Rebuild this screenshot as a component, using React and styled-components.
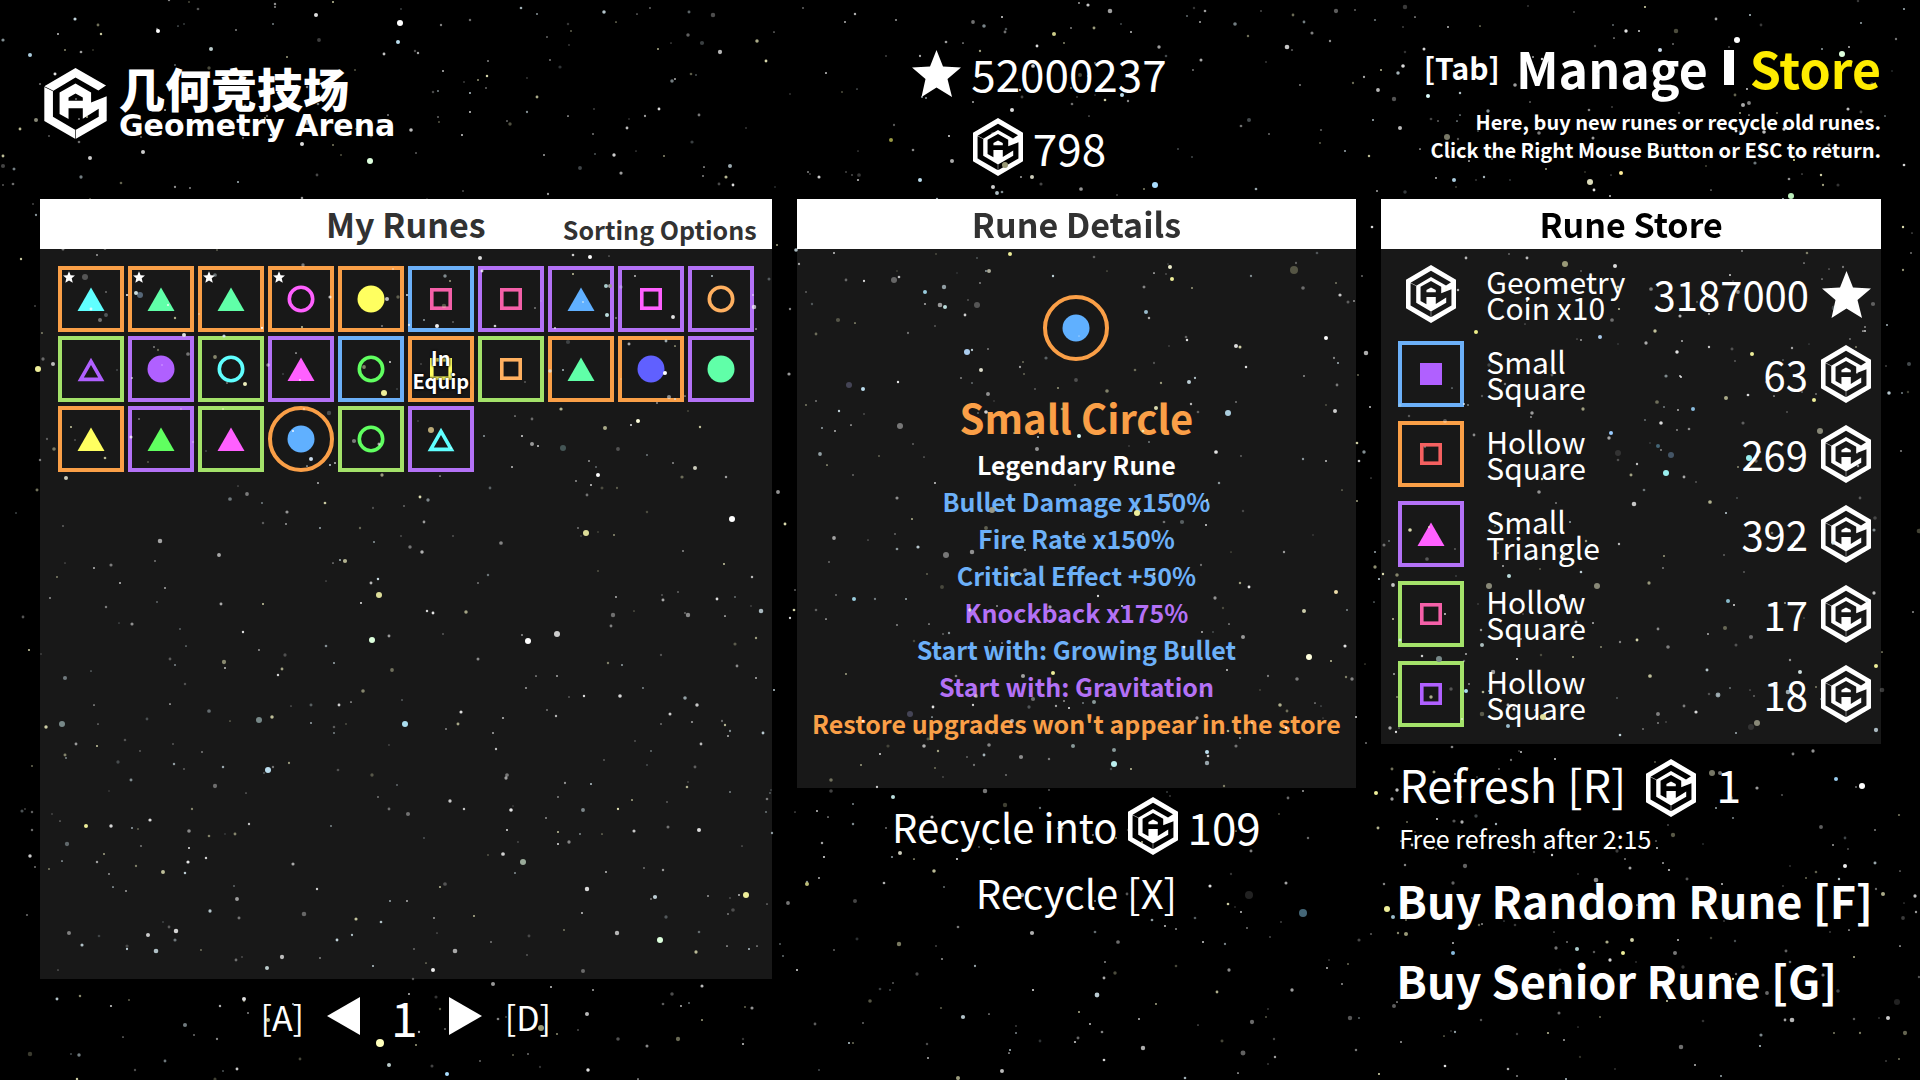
import styled, { createGlobalStyle, css } from 'styled-components'

const GlobalStyle = createGlobalStyle`
    * {
        box-sizing: border-box;
    }

    body {
        margin: 0;
        background: #000;
        color: #fff;
        font-family: "Noto Sans CJK SC", "Noto Sans", sans-serif;
    }

    button {
        padding: 0;
        border: 0;
        background: none;
        color: inherit;
        font: inherit;
        cursor: pointer;
    }

    h1, h2, h3, p, ul {
        margin: 0;
        padding: 0;
        list-style: none;
    }
`;

const rarity = {
    legendary: '#fa9f47',
    epic: '#b371f6',
    rare: '#6cb0f8',
    normal: '#a4e26a',
}

const colors = {
    cyan: '#60ffff',
    mint: '#60ffa8',
    magenta: '#ff60ff',
    yellow: '#ffff60',
    pink: '#f460a8',
    blue: '#60b0ff',
    orange: '#ffb060',
    purple: '#b060ff',
    green: '#60ff60',
    indigo: '#6060ff',
    red: '#f46060',
}

const Page = styled.div`
    min-height: 100vh;
    padding: 0 39px 0 40px;
`;

const Header = styled.header`
    display: grid;
    grid-template-columns: minmax(0, 732fr) minmax(0, 486fr) minmax(0, 574fr);
    column-gap: 25px;
    height: 199px;
`;

const Brand = styled.div`
    display: flex;
    align-items: center;
    align-self: start;
    gap: 12px;
    padding: 64px 0 0 4px;
`;

const BrandText = styled.h1`
    font-size: 46px;
    font-weight: 900;
    line-height: 46px;

    small {
        display: block;
        font-family: "DejaVu Sans", sans-serif;
        font-size: 30px;
        font-weight: 700;
        line-height: 32px;
    }
`;

const Wallet = styled.div`
    display: flex;
    flex-direction: column;
    align-items: center;
    gap: 14px;
    padding-top: 43px;
`;

const Amount = styled.div`
    display: flex;
    align-items: center;
    gap: 10px;
    font-size: 44px;
    line-height: 60px;
`;

const HeaderRight = styled.div`
    display: flex;
    flex-direction: column;
    align-items: flex-end;
    gap: 14px;
    padding-top: 40px;
`;

const Modes = styled.nav`
    display: flex;
    align-items: center;
    gap: 16px;
    font-size: 50px;
    font-weight: 700;
    line-height: 54px;
`;

const ModeKey = styled.span`
    font-size: 30px;
`;

const ModeBar = styled.span`
    width: 10px;
    height: 35px;
    background: #fff;
`;

const ModeButton = styled.button`
    color: ${props => props.$active ? '#ffec00' : '#fff'};
`;

const Hint = styled.p`
    font-size: 20px;
    font-weight: 700;
    line-height: 28px;
    text-align: right;
`;

const Columns = styled.main`
    display: grid;
    grid-template-columns: minmax(0, 732fr) minmax(0, 560fr) minmax(0, 500fr);
    column-gap: 25px;
    align-items: start;
`;

const Panel = styled.section`
    background: #181818;
`;

const PanelHeader = styled.div`
    position: relative;
    z-index: 2;
    display: grid;
    grid-template-columns: 1fr auto 1fr;
    align-items: center;
    height: 50px;
    padding: 0 15px;
    background: #fff;
    color: ${props => props.$dark ? '#000' : '#323232'};

    h2 {
        grid-column: 2;
        font-size: 34px;
        font-weight: 700;
        line-height: 50px;
    }
`;

const SortButton = styled.button`
    justify-self: end;
    padding-top: 10px;
    font-size: 25px;
    font-weight: 700;
    line-height: 40px;
`;

const RuneGrid = styled.div`
    display: grid;
    grid-template-columns: repeat(10, 66px);
    grid-template-rows: repeat(10, 66px);
    gap: 4px;
    justify-content: center;
    padding: 17px 0;
`;

const runeBox = css`
    position: relative;
    display: flex;
    align-items: center;
    justify-content: center;
    flex: none;
    width: 66px;
    height: 66px;
    border: 4px solid ${props => rarity[props.$rarity]};
    border-radius: ${props => props.$round ? '50%' : '0'};
`;

const RuneButton = styled.button`
    ${runeBox}
`;

const RuneFrame = styled.span`
    ${runeBox}
`;

const Fav = styled.span`
    position: absolute;
    top: 1px;
    left: 1px;
    display: flex;
`;

const EquipTag = styled.span`
    position: absolute;
    inset: 0;
    display: flex;
    align-items: center;
    justify-content: center;
    font-size: 20px;
    font-weight: 700;
    line-height: 23px;
    text-shadow: 0 0 2px #000, 0 0 3px #000;
`;

const Pager = styled.nav`
    display: flex;
    align-items: center;
    justify-content: center;
    gap: 23px;
    height: 74px;
    font-size: 34px;

    strong {
        padding: 0 8px;
        font-size: 48px;
        font-weight: 400;
    }

    svg {
        display: block;
    }
`;

const Details = styled.div`
    display: flex;
    flex-direction: column;
    align-items: center;
    padding: 46px 0;
`;

const RuneName = styled.h3`
    margin-top: 27px;
    color: ${rarity.legendary};
    font-size: 40px;
    font-weight: 700;
    line-height: 58px;
`;

const Effect = styled.li`
    color: ${props => rarity[props.$rarity] || '#fff'};
    font-size: 25px;
    font-weight: 700;
    line-height: 37px;
    text-align: center;
    white-space: nowrap;
`;

const RecycleRow = styled.div`
    display: flex;
    align-items: center;
    justify-content: center;
    gap: 10px;
    padding-top: 5px;
    font-size: 40px;
    line-height: 66px;
`;

const RecycleAmount = styled.span`
    font-size: 44px;
`;

const RecycleButton = styled.button`
    display: block;
    margin: 0 auto;
    font-size: 40px;
    line-height: 66px;
`;

const StoreList = styled.ul`
    padding: 5px 10px 10px 17px;
`;

const StoreItem = styled.button`
    display: flex;
    align-items: center;
    width: 100%;
    height: 80px;
    text-align: left;
`;

const StoreIcon = styled.span`
    display: flex;
    justify-content: center;
    flex: none;
    width: 66px;
`;

const StoreName = styled.span`
    flex: 1;
    padding-left: 22px;
    font-size: 30px;
    line-height: 26px;
`;

const Price = styled.span`
    padding-right: 13px;
    font-size: 40px;
    line-height: 60px;
`;

const RefreshButton = styled.button`
    display: flex;
    align-items: center;
    gap: 20px;
    height: 58px;
    margin: 15px 0 0 18px;
    font-size: 45px;
    line-height: 50px;

    span {
        padding-bottom: 8px;
    }
`;

const RefreshNote = styled.p`
    margin: 4px 0 5px 18px;
    font-size: 25px;
    line-height: 34px;
`;

const BuyButton = styled.button`
    display: block;
    margin-left: 15px;
    font-size: 45px;
    font-weight: 700;
    line-height: 80px;
    white-space: nowrap;
`;

const Sky = styled.svg`
    position: fixed;
    inset: 0;
    z-index: 1;
    width: 100%;
    height: 100%;
    pointer-events: none;
`;

const mark = 'M166 83L258 136L235 151L166 112L98 152V230L166 270L236 230V206L188 236V204H145V237L118 222V157L166 130L213 157V187L260 168V243L166 297L72 243V138Z M145 182V172L166 160L188 172V182Z M72 138L98 151V153L72 140Z M165 270H167V297H165Z'

const Logo = () => (
    <svg width="63" height="71" viewBox="72 83 188 214" aria-hidden="true">
        <path d={mark} fill="#fff" fillRule="evenodd" />
    </svg>
)

const Coin = () => (
    <svg width="50" height="58" viewBox="51 57 230 266" aria-hidden="true">
        <path d={'M166 57L281 124V256L166 323L51 256V124Z ' + mark} fill="#fff" fillRule="evenodd" />
    </svg>
)

const Star = ({ size = 49 }) => (
    <svg width={size} height={size} viewBox="0 0 49 49" aria-hidden="true">
        <path d="M24.5 1L31 17.5L49 18.5L35.5 30L40 48L24.5 38.5L9.5 48L13.5 30L0 18.5L18 17.5Z" fill="#fff" />
    </svg>
)

const Arrow = ({ right }) => (
    <svg width="33" height="38" viewBox="0 0 33 38" aria-hidden="true">
        <path d={right ? 'M0 0L33 19L0 38Z' : 'M33 0L0 19L33 38Z'} fill="#fff" />
    </svg>
)

const Shape = ({ shape, color, hollow }) => {
    const paint = hollow
        ? { fill: 'none', stroke: colors[color], strokeWidth: 3.6 }
        : { fill: colors[color] }
    const inset = hollow ? 1.8 : 0
    return (
        <svg width="28" height="28" viewBox="0 0 28 28" aria-hidden="true">
            {shape === 'circle' && <circle cx="14" cy="14" r={13.5 - inset} {...paint} />}
            {shape === 'square' && (
                <rect x={3 + inset} y={3 + inset} width={22 - inset * 2} height={22 - inset * 2} {...paint} />
            )}
            {shape === 'triangle' && (
                <path d={hollow ? 'M14 6.4L24.3 24.4H3.7Z' : 'M14 2.5L27.5 26H0.5Z'} {...paint} />
            )}
        </svg>
    )
}

// brighter stars, the faint ones are generated
const brightStars = [
    [400, 23, 3, '#fff'], [30, 55, 2, '#acd'], [158, 31, 2, '#fff'], [211, 49, 2, '#bcc'], [316, 15, 2, '#ddd'], [398, 42, 2, '#bde'],
    [370, 161, 3, '#dfd'], [143, 152, 2, '#ccc'], [90, 158, 2, '#ccc'], [302, 144, 2, '#ddd'], [36, 120, 2, '#887'],
    [38, 369, 3, '#ee9'], [53, 364, 2, '#bbb'], [85, 277, 3, '#555'], [140, 295, 3, '#567'], [136, 293, 2, '#cdd'],
    [387, 299, 2, '#bbb'], [384, 393, 3, '#ee9'], [245, 384, 2, '#eeb'], [311, 459, 2, '#cde'], [66, 478, 2, '#ccb'],
    [184, 335, 2, '#ddd'], [606, 286, 2, '#acc'], [607, 315, 2, '#bdd'], [610, 286, 2, '#999'], [665, 373, 2, '#fff'],
    [431, 430, 3, '#ba7'], [605, 428, 2, '#aa8'], [638, 421, 2, '#ffd'], [563, 448, 3, '#455'], [532, 444, 2, '#999'],
    [695, 468, 2, '#ccb'], [598, 475, 2, '#fff'], [590, 257, 2, '#fff'], [480, 258, 2, '#ddd'], [437, 326, 2, '#eee'],
    [1054, 34, 2, '#cc8'], [1122, 95, 2, '#bde'], [1155, 185, 3, '#adf'], [920, 180, 2, '#bde'], [1005, 165, 3, '#997'],
    [952, 161, 2, '#aaa'], [993, 187, 2, '#ccc'], [1032, 177, 2, '#ccb'], [1012, 110, 2, '#ddd'], [891, 140, 2, '#994'],
    [1737, 40, 3, '#fff'], [1660, 50, 2, '#cde'], [1447, 137, 3, '#776'], [1400, 128, 2, '#bbb'], [1621, 173, 2, '#fe9'],
    [1590, 182, 3, '#ddb'], [1454, 180, 2, '#acd'], [1743, 105, 2, '#aaa'], [1428, 96, 2, '#dff'], [1794, 160, 1, '#ee9'],
    [894, 280, 3, '#666'], [989, 271, 2, '#aa9'], [1010, 254, 2, '#ee9'], [925, 292, 2, '#9cd'], [945, 307, 2, '#bdd'],
    [977, 305, 3, '#555'], [967, 352, 3, '#ace'], [1170, 267, 2, '#eec'], [1172, 279, 2, '#ee9'], [1294, 270, 4, '#554'],
    [1146, 312, 2, '#9bc'], [1228, 413, 3, '#acd'], [849, 385, 3, '#445'], [900, 426, 3, '#777'], [863, 389, 2, '#bde'],
    [1079, 436, 2, '#dff'], [981, 370, 2, '#ddc'], [1326, 338, 2, '#fff'], [1335, 411, 2, '#ccc'], [1236, 346, 2, '#ddd'],
    [1137, 513, 3, '#ee9'], [992, 510, 3, '#998'], [946, 555, 3, '#777'], [854, 599, 2, '#9cd'], [1309, 657, 3, '#ffd'],
    [1243, 637, 2, '#999'], [1336, 592, 2, '#eda'], [1304, 611, 2, '#cca'], [1053, 673, 2, '#ee9'], [1094, 702, 2, '#899'],
    [1114, 764, 3, '#bee'], [1114, 750, 2, '#899'], [1207, 752, 2, '#bde'], [1073, 746, 2, '#899'], [910, 714, 3, '#445'],
    [893, 797, 2, '#bdd'], [1303, 913, 4, '#467'], [1249, 895, 4, '#222'], [900, 853, 2, '#ccb'], [807, 884, 2, '#bb7'],
    [1565, 264, 3, '#997'], [1615, 266, 2, '#ddd'], [1476, 332, 2, '#ee8'], [1600, 337, 2, '#ace'], [1752, 354, 2, '#ee9'],
    [1814, 400, 2, '#ee9'], [1693, 409, 2, '#8bd'], [1726, 398, 2, '#aa8'], [1749, 458, 3, '#9ee'], [1666, 473, 3, '#9ee'],
    [1671, 455, 3, '#456'], [1658, 446, 2, '#467'], [1820, 431, 3, '#887'], [1611, 433, 2, '#9cf'], [1618, 453, 3, '#333'],
    [1597, 586, 3, '#887'], [1489, 586, 3, '#887'], [1562, 597, 3, '#fff'], [1728, 601, 2, '#8bc'], [1509, 576, 2, '#bdd'],
    [1482, 645, 2, '#abb'], [1439, 659, 3, '#788'], [1466, 691, 2, '#ade'], [1757, 723, 3, '#887'], [1751, 727, 3, '#333'],
    [1543, 717, 3, '#dd9'], [1508, 726, 2, '#9bc'], [1800, 672, 2, '#cdd'], [1876, 666, 2, '#ee9'], [1791, 196, 3, '#beb'],
    [1712, 773, 3, '#776'], [1862, 786, 3, '#fff'], [1836, 779, 2, '#9ce'], [1387, 909, 3, '#ee9'], [1376, 793, 2, '#ee9'],
    [1393, 917, 2, '#9bc'], [1406, 934, 2, '#997'], [1453, 953, 2, '#8bd'], [1577, 949, 2, '#acc'], [1623, 953, 2, '#ee9'],
    [1675, 953, 2, '#777'], [1883, 894, 2, '#aa8'], [1888, 1018, 2, '#ccc'], [1845, 866, 2, '#eee'], [1897, 1002, 3, '#222'],
    [380, 1043, 4, '#ffb'], [389, 1065, 2, '#bcc'], [447, 1074, 2, '#adf'], [267, 968, 2, '#bcc'], [433, 970, 2, '#eee'],
    [541, 1028, 3, '#997'], [244, 999, 2, '#ddd'], [493, 984, 2, '#999'], [405, 724, 3, '#ade'], [372, 640, 3, '#dfd'],
    [523, 862, 3, '#9a9'], [746, 895, 3, '#ee9'], [557, 634, 3, '#ccc'], [586, 533, 3, '#dd9'], [379, 595, 3, '#dd9'],
    [732, 519, 3, '#fff'], [660, 940, 3, '#dfd'], [528, 641, 3, '#fff'], [259, 720, 3, '#788'], [62, 724, 3, '#788'],
    [86, 826, 2, '#ee9'], [268, 770, 3, '#bde'], [148, 935, 2, '#ccc'], [699, 830, 2, '#ddd'], [1842, 54, 3, '#dfd'],
]

let seed = 20210
const random = () => {
    seed = (seed * 16807) % 2147483647
    return seed / 2147483647
}

const faintColors = ['#fff', '#fff', '#fff', '#d8ecf4', '#f6f6c4']
const faintStars = Array.from({ length: 1700 }, () => ({
    x: Math.round(random() * 1920),
    y: Math.round(random() * 1080),
    r: 0.8 + random() * random() * 1.7,
    opacity: 0.2 + random() * 0.7,
    fill: faintColors[Math.floor(random() * faintColors.length)],
}))

const Starfield = () => (
    <Sky viewBox="0 0 1920 1080" preserveAspectRatio="xMidYMid slice" aria-hidden="true">
        {faintStars.map((s, i) => (
            <circle key={i} cx={s.x} cy={s.y} r={s.r} fill={s.fill} opacity={s.opacity} />
        ))}
        {brightStars.map(([x, y, r, fill]) => (
            <circle key={x + '-' + y} cx={x} cy={y} r={r} fill={fill} />
        ))}
    </Sky>
)

const runes = [
    { rarity: 'legendary', shape: 'triangle', color: 'cyan', fav: true },
    { rarity: 'legendary', shape: 'triangle', color: 'mint', fav: true },
    { rarity: 'legendary', shape: 'triangle', color: 'mint', fav: true },
    { rarity: 'legendary', shape: 'circle', color: 'magenta', hollow: true, fav: true },
    { rarity: 'legendary', shape: 'circle', color: 'yellow' },
    { rarity: 'rare', shape: 'square', color: 'pink', hollow: true },
    { rarity: 'epic', shape: 'square', color: 'pink', hollow: true },
    { rarity: 'epic', shape: 'triangle', color: 'blue' },
    { rarity: 'epic', shape: 'square', color: 'magenta', hollow: true },
    { rarity: 'epic', shape: 'circle', color: 'orange', hollow: true },
    { rarity: 'normal', shape: 'triangle', color: 'purple', hollow: true },
    { rarity: 'epic', shape: 'circle', color: 'purple' },
    { rarity: 'normal', shape: 'circle', color: 'cyan', hollow: true },
    { rarity: 'epic', shape: 'triangle', color: 'magenta' },
    { rarity: 'rare', shape: 'circle', color: 'green', hollow: true },
    { rarity: 'legendary', shape: 'square', color: 'yellow', hollow: true, equipped: true },
    { rarity: 'normal', shape: 'square', color: 'orange', hollow: true },
    { rarity: 'legendary', shape: 'triangle', color: 'mint' },
    { rarity: 'legendary', shape: 'circle', color: 'indigo' },
    { rarity: 'epic', shape: 'circle', color: 'mint' },
    { rarity: 'legendary', shape: 'triangle', color: 'yellow' },
    { rarity: 'epic', shape: 'triangle', color: 'green' },
    { rarity: 'normal', shape: 'triangle', color: 'magenta' },
    { rarity: 'legendary', shape: 'circle', color: 'blue', selected: true },
    { rarity: 'normal', shape: 'circle', color: 'green', hollow: true },
    { rarity: 'epic', shape: 'triangle', color: 'cyan', hollow: true },
]

const effects = [
    ['Legendary Rune'],
    ['Bullet Damage x150%', 'rare'],
    ['Fire Rate x150%', 'rare'],
    ['Critical Effect +50%', 'rare'],
    ['Knockback x175%', 'epic'],
    ['Start with: Growing Bullet', 'rare'],
    ['Start with: Gravitation', 'epic'],
    ["Restore upgrades won't appear in the store", 'legendary'],
]

const storeRunes = [
    { name: ['Small', 'Square'], price: 63, rarity: 'rare', shape: 'square', color: 'purple' },
    { name: ['Hollow', 'Square'], price: 269, rarity: 'legendary', shape: 'square', color: 'red', hollow: true },
    { name: ['Small', 'Triangle'], price: 392, rarity: 'epic', shape: 'triangle', color: 'magenta' },
    { name: ['Hollow', 'Square'], price: 17, rarity: 'normal', shape: 'square', color: 'pink', hollow: true },
    { name: ['Hollow', 'Square'], price: 18, rarity: 'normal', shape: 'square', color: 'purple', hollow: true },
]

const App = () => {
    return (
        <Page>
            <GlobalStyle />
            <Header>
                <Brand>
                    <Logo />
                    <BrandText>几何竞技场<small>Geometry Arena</small></BrandText>
                </Brand>
                <Wallet>
                    <Amount><Star />52000237</Amount>
                    <Amount><Coin />798</Amount>
                </Wallet>
                <HeaderRight>
                    <Modes>
                        <ModeKey>[Tab]</ModeKey>
                        <ModeButton>Manage</ModeButton>
                        <ModeBar />
                        <ModeButton $active>Store</ModeButton>
                    </Modes>
                    <Hint>
                        Here, buy new runes or recycle old runes.<br />
                        Click the Right Mouse Button or ESC to return.
                    </Hint>
                </HeaderRight>
            </Header>
            <Columns>
                <div>
                    <Panel>
                        <PanelHeader>
                            <h2>My Runes</h2>
                            <SortButton>Sorting Options</SortButton>
                        </PanelHeader>
                        <RuneGrid>
                            {runes.map((rune, i) => (
                                <RuneButton
                                    key={i}
                                    $rarity={rune.rarity}
                                    $round={rune.selected}
                                    aria-label={`${rune.color} ${rune.shape}`}
                                >
                                    <Shape {...rune} />
                                    {rune.fav && <Fav><Star size={12} /></Fav>}
                                    {rune.equipped && <EquipTag>In<br />Equip</EquipTag>}
                                </RuneButton>
                            ))}
                        </RuneGrid>
                    </Panel>
                    <Pager>
                        <span>[A]</span>
                        <button aria-label="Previous page"><Arrow /></button>
                        <strong>1</strong>
                        <button aria-label="Next page"><Arrow right /></button>
                        <span>[D]</span>
                    </Pager>
                </div>
                <div>
                    <Panel>
                        <PanelHeader>
                            <h2>Rune Details</h2>
                        </PanelHeader>
                        <Details>
                            <RuneFrame $rarity="legendary" $round>
                                <Shape shape="circle" color="blue" />
                            </RuneFrame>
                            <RuneName>Small Circle</RuneName>
                            <ul>
                                {effects.map(([text, level]) => (
                                    <Effect key={text} $rarity={level}>{text}</Effect>
                                ))}
                            </ul>
                        </Details>
                    </Panel>
                    <RecycleRow>
                        Recycle into<Coin /><RecycleAmount>109</RecycleAmount>
                    </RecycleRow>
                    <RecycleButton>Recycle [X]</RecycleButton>
                </div>
                <div>
                    <Panel>
                        <PanelHeader $dark>
                            <h2>Rune Store</h2>
                        </PanelHeader>
                        <StoreList>
                            <li>
                                <StoreItem>
                                    <StoreIcon><Coin /></StoreIcon>
                                    <StoreName>Geometry<br />Coin x10</StoreName>
                                    <Price>3187000</Price>
                                    <Star />
                                </StoreItem>
                            </li>
                            {storeRunes.map((rune, i) => (
                                <li key={i}>
                                    <StoreItem>
                                        <RuneFrame $rarity={rune.rarity}>
                                            <Shape {...rune} />
                                        </RuneFrame>
                                        <StoreName>{rune.name[0]}<br />{rune.name[1]}</StoreName>
                                        <Price>{rune.price}</Price>
                                        <Coin />
                                    </StoreItem>
                                </li>
                            ))}
                        </StoreList>
                    </Panel>
                    <RefreshButton>
                        <span>Refresh [R]</span>
                        <Coin />
                        <span>1</span>
                    </RefreshButton>
                    <RefreshNote>Free refresh after 2:15</RefreshNote>
                    <BuyButton>Buy Random Rune [F]</BuyButton>
                    <BuyButton>Buy Senior Rune [G]</BuyButton>
                </div>
            </Columns>
            <Starfield />
        </Page>
    )
}
export default App
